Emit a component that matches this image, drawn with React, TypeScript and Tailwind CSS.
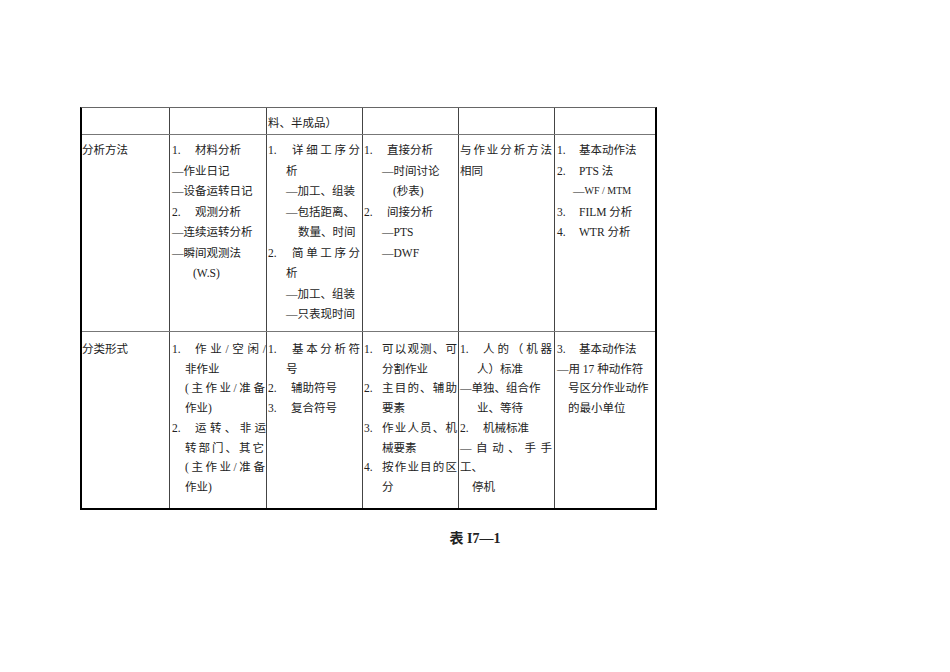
import React from 'react'

type Kids = { children?: React.ReactNode }

// a line whose characters are spread over the whole width (Word-style justify)
function Spread({ text }: { text: string }) {
    return (
        <span className="flex flex-1 justify-between">
            {Array.from(text)
                .filter((c) => c !== ' ')
                .map((c, i) => (
                    <span key={i}>{c}</span>
                ))}
        </span>
    )
}

// numbered line: "1." sits in a fixed slot, the text follows
function Item({ n, w = 'w-[23px]', children }: Kids & { n: string; w?: string }) {
    return (
        <div className="flex">
            <span className={`${w} shrink-0`}>{n}</span>
            <span className="flex flex-1">{children}</span>
        </div>
    )
}

function Line({ className = '', children }: Kids & { className?: string }) {
    return <div className={`flex ${className}`}>{children}</div>
}

export default function App() {
    return (
        <div className="min-h-[672px] bg-white text-[#222] text-[11.5px] whitespace-nowrap font-[family-name:Liberation_Serif,Noto_Sans_CJK_SC,serif]">
            <div className="pt-[107px] pl-[80px]">
                <div className="w-[577px] border-t border-t-[#666] border-x-2 border-x-black border-b-2 border-b-black">
                    {/* row 1 */}
                    <div className="flex h-[27px] border-b border-b-[#777] leading-[20px]">
                        <div className="w-[88px] border-r border-r-[#444]" />
                        <div className="w-[97px] border-r border-r-[#444]" />
                        <div className="w-[96px] border-r border-r-[#444] pl-[1px] pt-[5px]">料、半成品）</div>
                        <div className="w-[96px] border-r border-r-[#444]" />
                        <div className="w-[96px] border-r border-r-[#444]" />
                        <div className="w-[100px]" />
                    </div>

                    {/* row 2 */}
                    <div className="flex h-[197px] border-b border-b-[#777] leading-[20.5px]">
                        <div className="w-[88px] border-r border-r-[#444] pt-[5px]">分析方法</div>
                        <div className="w-[97px] border-r border-r-[#444] pl-[2px] pt-[5px]">
                            <Item n="1.">材料分析</Item>
                            <Line>—作业日记</Line>
                            <Line>—设备运转日记</Line>
                            <Item n="2.">观测分析</Item>
                            <Line>—连续运转分析</Line>
                            <Line>—瞬间观测法</Line>
                            <Line className="pl-[21px]">(W.S)</Line>
                        </div>
                        <div className="w-[96px] border-r border-r-[#444] pl-[1px] pr-[2px] pt-[5px]">
                            <Item n="1." w="w-[24px]">
                                <Spread text="详细工序分" />
                            </Item>
                            <Line className="pl-[18px]">析</Line>
                            <Line className="pl-[18px]">—加工、组装</Line>
                            <Line className="pl-[18px]">—包括距离、</Line>
                            <Line className="pl-[30px]">数量、时间</Line>
                            <Item n="2." w="w-[24px]">
                                <Spread text="简单工序分" />
                            </Item>
                            <Line className="pl-[18px]">析</Line>
                            <Line className="pl-[18px]">—加工、组装</Line>
                            <Line className="pl-[18px]">—只表现时间</Line>
                        </div>
                        <div className="w-[96px] border-r border-r-[#444] pl-[1px] pt-[5px]">
                            <Item n="1.">直接分析</Item>
                            <Line className="pl-[18px]">—时间讨论</Line>
                            <Line className="pl-[29px]">(秒表)</Line>
                            <Item n="2.">间接分析</Item>
                            <Line className="pl-[18px]">—PTS</Line>
                            <Line className="pl-[18px]">—DWF</Line>
                        </div>
                        <div className="w-[96px] border-r border-r-[#444] pl-[1px] pr-[2px] pt-[5px]">
                            <Line>
                                <Spread text="与作业分析方法" />
                            </Line>
                            <Line>相同</Line>
                        </div>
                        <div className="w-[100px] pl-[2px] pt-[5px]">
                            <Item n="1." w="w-[22px]">基本动作法</Item>
                            <Item n="2." w="w-[22px]">PTS 法</Item>
                            <Line className="pl-[16px]">
                                —<span className="text-[10px]">WF / MTM</span>
                            </Line>
                            <Item n="3." w="w-[22px]">FILM 分析</Item>
                            <Item n="4." w="w-[22px]">WTR 分析</Item>
                        </div>
                    </div>

                    {/* row 3 */}
                    <div className="flex h-[176px] leading-[19.7px]">
                        <div className="w-[88px] border-r border-r-[#444] pt-[8px]">分类形式</div>
                        <div className="w-[97px] border-r border-r-[#444] pl-[2px] pt-[8px]">
                            <Item n="1.">
                                <Spread text="作业/空闲/" />
                            </Item>
                            <Line className="pl-[13px]">非作业</Line>
                            <Line className="pl-[13px] pr-[1px]">
                                <Spread text="(主作业/准备" />
                            </Line>
                            <Line className="pl-[13px]">作业)</Line>
                            <Item n="2.">
                                <Spread text="运转、非运" />
                            </Item>
                            <Line className="pl-[13px] pr-[2px]">
                                <Spread text="转部门、其它" />
                            </Line>
                            <Line className="pl-[13px] pr-[1px]">
                                <Spread text="(主作业/准备" />
                            </Line>
                            <Line className="pl-[13px]">作业)</Line>
                        </div>
                        <div className="w-[96px] border-r border-r-[#444] pl-[1px] pr-[2px] pt-[8px]">
                            <Item n="1." w="w-[24px]">
                                <Spread text="基本分析符" />
                            </Item>
                            <Line className="pl-[18px]">号</Line>
                            <Item n="2.">辅助符号</Item>
                            <Item n="3.">复合符号</Item>
                        </div>
                        <div className="w-[96px] border-r border-r-[#444] pl-[1px] pr-[1px] pt-[8px]">
                            <Item n="1." w="w-[18px]">
                                <Spread text="可以观测、可" />
                            </Item>
                            <Line className="pl-[18px]">分割作业</Line>
                            <Item n="2." w="w-[18px]">
                                <Spread text="主目的、辅助" />
                            </Item>
                            <Line className="pl-[18px]">要素</Line>
                            <Item n="3." w="w-[18px]">
                                <Spread text="作业人员、机" />
                            </Item>
                            <Line className="pl-[18px]">械要素</Line>
                            <Item n="4." w="w-[18px]">
                                <Spread text="按作业目的区" />
                            </Item>
                            <Line className="pl-[18px]">分</Line>
                        </div>
                        <div className="w-[96px] border-r border-r-[#444] pl-[1px] pr-[2px] pt-[8px]">
                            <Item n="1.">
                                <Spread text="人的（机器" />
                            </Item>
                            <Line className="pl-[17px]">人）标准</Line>
                            <Line>—单独、组合作</Line>
                            <Line className="pl-[17px]">业、等待</Line>
                            <Item n="2.">机械标准</Item>
                            <Line>
                                <Spread text="—自动、手手" />
                            </Line>
                            <Line>工、</Line>
                            <Line className="pl-[12px]">停机</Line>
                        </div>
                        <div className="w-[100px] pl-[2px] pt-[8px]">
                            <Item n="3." w="w-[22px]">基本动作法</Item>
                            <Line>—用 17 种动作符</Line>
                            <Line className="pl-[11px]">号区分作业动作</Line>
                            <Line className="pl-[11px]">的最小单位</Line>
                        </div>
                    </div>
                </div>
            </div>

            <div className="mt-[21px] text-center text-[14px] leading-[16px] font-bold">表 I7—1</div>
        </div>
    )
}
